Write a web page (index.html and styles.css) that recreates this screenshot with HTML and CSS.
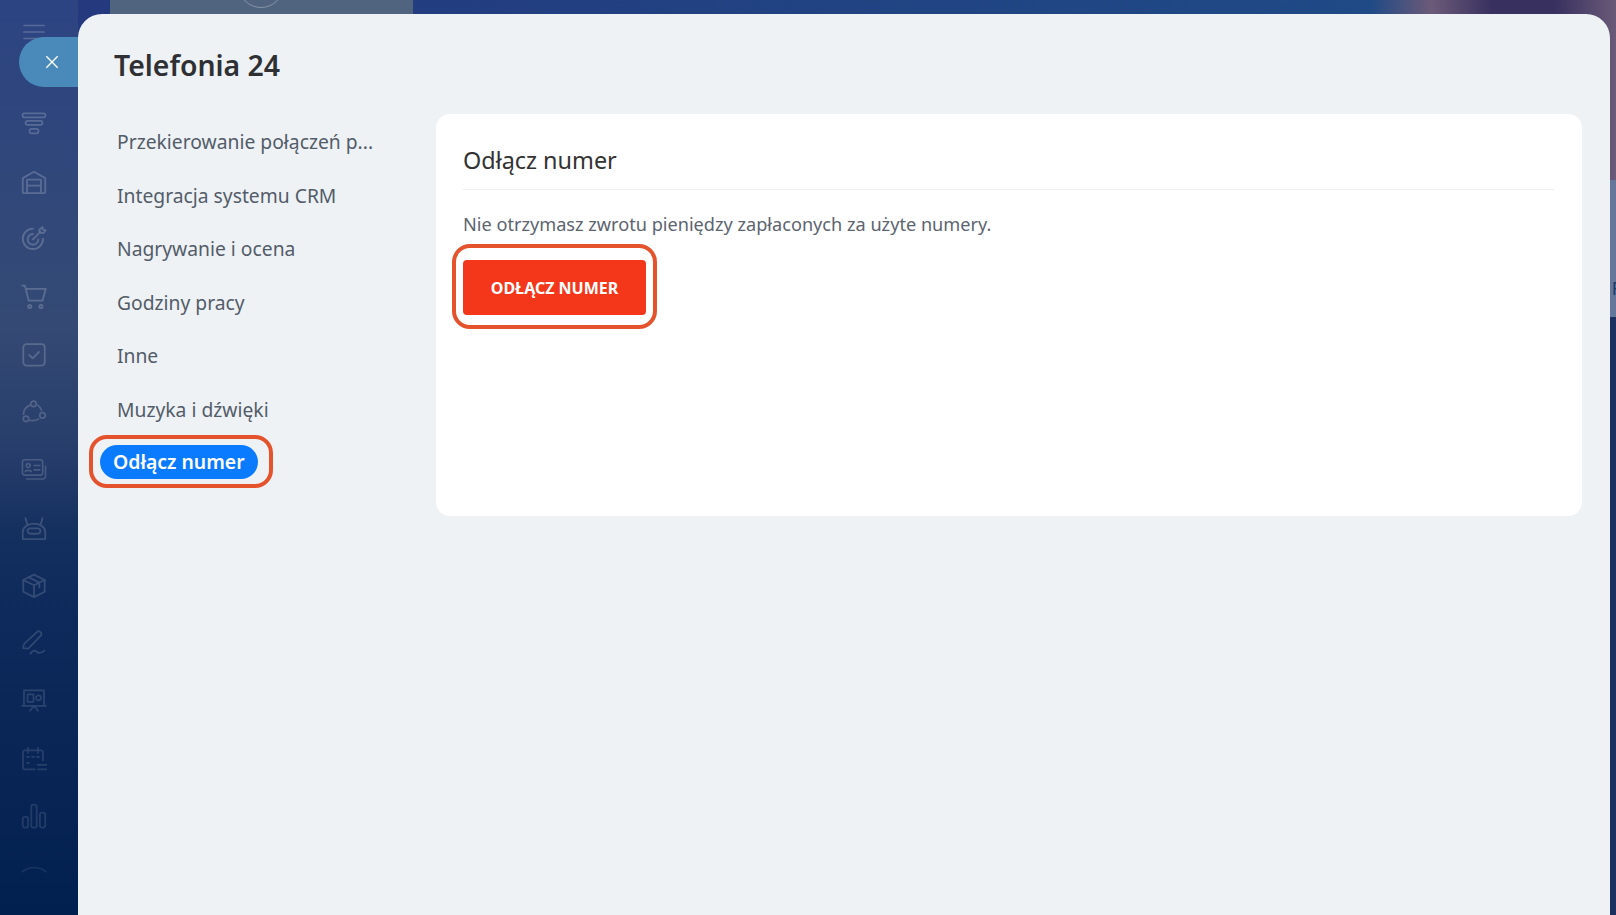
FILE: index.html
```html
<!DOCTYPE html>
<html lang="pl">
<head>
  <meta charset="UTF-8">
  <title>Telefonia 24</title>
  <link rel="stylesheet" href="styles.css">
</head>
<body>

  <div class="page">
    <!-- Left menu, dimmed behind the slider -->
    <aside class="sidebar">
      <div class="menu">
        <svg class="icon burger" viewBox="0 0 22 16"><path d="M1 1.500h20M1 8h20M1 14.500h20"/></svg>
        <div class="menu-gap"></div>
        <svg class="icon" viewBox="0 0 26 24"><rect x="1.500" y="1.500" width="23" height="4" rx="2"/><rect x="4.500" y="9" width="17" height="4" rx="2"/><rect x="8.500" y="17" width="9" height="4.500" rx="2.200"/></svg>
        <svg class="icon" viewBox="0 0 24 24"><path d="M1.500 21.500V8.500L12 2.500l10.500 6v13a1 1 0 0 1-1 1h-19a1 1 0 0 1-1-1z"/><path d="M5.500 22.500V10h13v12.500M5.500 15.500h13"/></svg>
        <svg class="icon" viewBox="0 0 24 24"><path d="M20.500 12a9.500 9.500 0 1 1-9.500-9.500M16 12.500a5 5 0 1 1-5-5"/><path d="M11 12.500l7-7M17 6.500V3.500l3-2.500.5 2.500L23 4l-2 2.500z"/></svg>
        <svg class="icon" viewBox="0 0 24 24"><path d="M1 1.500h2.500L7 15.500h13l3-11H5"/><circle cx="8" cy="21" r="1.500"/><circle cx="18.500" cy="21" r="1.500"/></svg>
        <svg class="icon" viewBox="0 0 24 24"><rect x="2" y="2" width="20" height="20" rx="3"/><path d="M7.500 12l3.200 3.200 6-6"/></svg>
        <svg class="icon" viewBox="0 0 26 24"><circle cx="12.500" cy="4" r="2.800"/><circle cx="5" cy="19" r="2.800"/><circle cx="21.500" cy="15.500" r="2.800"/><path d="M8.500 5.500C5 7 2.500 10.500 2.500 14.500M17 5.500a9.500 9.500 0 0 1 3.500 5M9 20.500c3 .7 6 .3 8.500-1.300"/></svg>
        <svg class="icon" viewBox="0 0 27 24"><rect x="1.500" y="1.500" width="21" height="16" rx="2.500"/><circle cx="7.500" cy="7.500" r="2"/><path d="M4.500 14c0-2 6-2 6 0M13.500 7.500h6M13.500 12h6M6 21.500h16.500a3 3 0 0 0 3-3V8"/></svg>
        <svg class="icon" viewBox="0 0 24 24"><path d="M1.500 22.500v-6.500a10.500 8 0 0 1 21 0v6.500z"/><rect x="6" y="12.500" width="12" height="5" rx="2.500"/><path d="M6 9.500L4 3M18 9.500l2-6.500"/></svg>
        <svg class="icon" viewBox="0 0 24 24"><path d="M12 1.500l10 5v11l-10 5-10-5v-11z"/><path d="M2 6.500l10 5 10-5M12 11.500v11M7 4l10 5v4.500"/></svg>
        <svg class="icon" viewBox="0 0 25 24"><path d="M2 17l1-4L15.500 1.500a2 2 0 0 1 3 0l.5.500a2 2 0 0 1 0 3L7 17.500z"/><path d="M9 22.500c2-3.500 4-3.500 6-2s4 2 7.500-1"/></svg>
        <svg class="icon" viewBox="0 0 26 24"><path d="M3 1.500h20V17H3zM1 17h24M13 17l-4 5M13 17l4 5"/><rect x="6.500" y="5.500" width="6" height="7.500"/><circle cx="17.500" cy="9" r="2.500"/></svg>
        <svg class="icon" viewBox="0 0 26 24"><path d="M14 22.500H4a2 2 0 0 1-2-2v-15a2 2 0 0 1 2-2h16a2 2 0 0 1 2 2v8M7 1v5M17 1v5M16.500 18h9M17 22.500h8.500"/><path d="M6 10h2M11 10h2M16 10h2M6 16h2"/></svg>
        <svg class="icon" viewBox="0 0 24 24"><rect x="1.500" y="13" width="5" height="10" rx="2"/><rect x="9.500" y="1.500" width="5" height="21.500" rx="2"/><rect x="17.500" y="9" width="5" height="14" rx="2"/></svg>
        <svg class="icon faded" viewBox="0 0 24 24"><path d="M1 10c6-5 16-5 22 0"/></svg>
        <svg class="icon faded" viewBox="0 0 24 24"><path d="M2 12c0-3 3-4 5-4 1-3 3-5 5-5s4 2 5 5c2 0 5 1 5 4"/></svg>
      </div>
    </aside>

    <!-- Page behind the slider -->
    <main class="backdrop">
      <div class="hero">
        <div class="hero-card"><span class="hero-circle"></span></div>
      </div>
      <div class="band"><span>Fo</span></div>
    </main>
  </div>

  <button class="slider-close">
    <svg viewBox="0 0 16 16"><path d="M1.500 1.500l13 13M14.500 1.500l-13 13"/></svg>
  </button>

  <div class="slider">
    <h1>Telefonia 24</h1>
    <div class="slider-body">
      <nav class="tabs">
        <a href="#">Przekierowanie połączeń p...</a>
        <a href="#">Integracja systemu CRM</a>
        <a href="#">Nagrywanie i ocena</a>
        <a href="#">Godziny pracy</a>
        <a href="#">Inne</a>
        <a href="#">Muzyka i dźwięki</a>
        <div class="tab-mark"><a href="#" class="active">Odłącz numer</a></div>
      </nav>
      <section class="card">
        <h2>Odłącz numer</h2>
        <p>Nie otrzymasz zwrotu pieniędzy zapłaconych za użyte numery.</p>
        <div class="btn-mark"><button class="btn-danger">ODŁĄCZ NUMER</button></div>
      </section>
    </div>
  </div>

</body>
</html>
```

FILE: styles.css
```css
* {
  box-sizing: border-box;
  font-family: "Noto Sans", "Open Sans", sans-serif;
}
body {
  margin: 0;
  overflow: hidden;
  background: #02204f;
}
.page {
  display: flex;
  height: 100vh;
  overflow: hidden;
}

/* Left menu */
.sidebar {
  width: 78px;
  flex-shrink: 0;
  overflow: hidden;
  background: linear-gradient(180deg, #2c4482 0%, #344a74 36%, #263c6a 50%, #14305f 58%, #0e2a5c 67%, #02204f 100%);
}
.menu {
  height: 100%;
  display: flex;
  flex-direction: column;
  align-items: center;
  padding: 24px 10px 0 0;
  gap: 32px;
  mask-image: linear-gradient(180deg, #000 30%, rgba(0, 0, 0, 0.5) 100%);
}
.icon {
  width: 26px;
  height: 25.700px;
  flex-shrink: 0;
  fill: none;
  stroke: #fff;
  stroke-width: 1.700;
  stroke-linecap: round;
  stroke-linejoin: round;
  opacity: 0.2;
}
.icon.faded {
  opacity: 0.14;
}
.burger {
  height: 16px;
}
.menu-gap {
  height: 7px;
  flex-shrink: 0;
}

/* Page behind */
.backdrop {
  flex: 1;
  display: flex;
  flex-direction: column;
  background: #1c2f60;
}
.hero {
  height: 180px;
  padding-left: 32px;
  background: linear-gradient(90deg, #24397e 0%, #1f4a86 84%, #6c5a78 88%, #38305f 92%, #38305f 96%, #6a5a78 100%);
}
.hero-card {
  width: 303px;
  height: 40px;
  background: #50647f;
  position: relative;
  overflow: hidden;
}
.hero-circle {
  position: absolute;
  left: 128px;
  top: -38px;
  width: 46px;
  height: 46px;
  border: 1px solid #8593a8;
  border-radius: 50%;
}
.band {
  height: 137px;
  background: #64779a;
  display: flex;
  justify-content: flex-end;
  align-items: flex-end;
  overflow: hidden;
  padding-bottom: 17px;
}
.band span {
  font-size: 18px;
  color: #1d3a66;
  margin-right: -16px;
}

/* Slider */
.slider-close {
  position: absolute;
  left: 19px;
  top: 37px;
  width: 70px;
  height: 50px;
  border: none;
  border-radius: 25px 0 0 25px;
  background: #4a8abb;
  padding: 0 0 0 26px;
  display: flex;
  align-items: center;
}
.slider-close svg {
  width: 14px;
  height: 14px;
  fill: none;
  stroke: #fff;
  stroke-width: 1.500;
}
.slider {
  position: absolute;
  left: 78px;
  top: 14px;
  right: 6px;
  bottom: 0;
  background: #eef2f4;
  border-radius: 24px 24px 0 0;
  padding: 0 28px 0 12px;
}
.slider h1 {
  margin: 31px 0 29px 24px;
  font-size: 28.400px;
  line-height: 40px;
  font-weight: 600;
  color: #2e3033;
}
.slider-body {
  display: flex;
}

/* Tabs */
.tabs {
  width: 346px;
  flex-shrink: 0;
  display: flex;
  flex-direction: column;
  align-items: flex-start;
  padding-top: 14px;
}
.tabs a {
  display: block;
  height: 53.600px;
  padding-left: 27px;
  font-size: 19.300px;
  line-height: 28px;
  color: #535c69;
  text-decoration: none;
  white-space: nowrap;
}
.tab-mark {
  margin: -15px 0 0 -1px;
  padding: 6px 11px 5px 7px;
  border: 4px solid #e5532d;
  border-radius: 18px;
}
.tabs .active {
  height: 34px;
  padding: 0 13px;
  font-size: 19.400px;
  line-height: 33px;
  border-radius: 17px;
  background: #0a7bff;
  color: #fff;
  font-weight: 600;
}

/* Content card */
.card {
  width: 1146px;
  height: 402px;
  padding: 26px 28px 0 27px;
  background: #fff;
  border-radius: 14px;
}
.card h2 {
  margin: 0;
  padding-bottom: 9px;
  font-size: 23.400px;
  line-height: 40px;
  font-weight: 400;
  color: #333;
  border-bottom: 1.500px solid #eef0f2;
}
.card p {
  margin: 20px 0 0;
  font-size: 18.150px;
  line-height: 28px;
  color: #5c6470;
}
.btn-mark {
  display: inline-block;
  margin: 6px 0 0 -11px;
  padding: 12px 7px 10px;
  border: 4px solid #e5532d;
  border-radius: 18px;
  background: #fff;
}
.btn-danger {
  display: block;
  width: 183px;
  height: 55px;
  border: none;
  border-radius: 4px;
  background: #f4361a;
  color: #fff;
  font-size: 16px;
  font-weight: 700;
}
```
